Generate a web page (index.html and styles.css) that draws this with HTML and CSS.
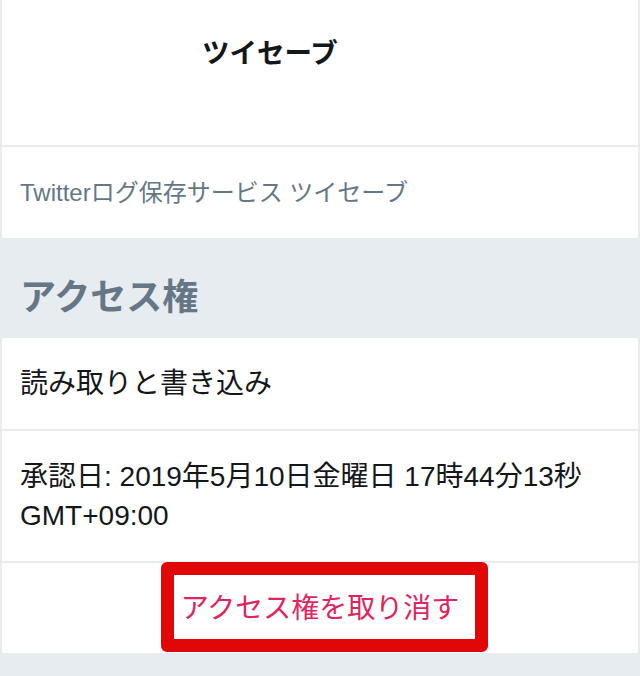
FILE: index.html
```html
<!DOCTYPE html>
<html lang="ja">
<head>
    <meta charset="UTF-8">
    <meta name="viewport" content="width=device-width, initial-scale=1.0">
    <title>ツイセーブ</title>
    <link rel="stylesheet" href="styles.css">
</head>
<body>
    <div class="page">
        <div class="header">
            <h1 class="app-title">ツイセーブ</h1>
        </div>
        <div class="row row-muted">Twitterログ保存サービス ツイセーブ</div>
        <h2 class="section-title">アクセス権</h2>
        <div class="row">読み取りと書き込み</div>
        <div class="row">承認日: 2019年5月10日金曜日 17時44分13秒<br>GMT+09:00</div>
        <div class="row row-action">
            <button class="revoke-button">アクセス権を取り消す</button>
        </div>
    </div>
</body>
</html>
```

FILE: styles.css
```css
body {
    margin: 0;
    padding: 0;
    background: #e6ecf0;
    font-family: 'Liberation Sans', 'Noto Sans CJK JP', sans-serif;
    color: #14171a;
    overflow: hidden;
}

.page {
    display: flex;
    flex-direction: column;
    gap: 2px;
    padding: 0 2px;
}

.header {
    background: #fff;
    height: 145px;
    padding-left: 200px;
    box-sizing: border-box;
}

.app-title {
    margin: 0;
    padding-top: 34px;
    font-size: 27.5px;
    line-height: 40px;
    font-weight: 700;
}

.row {
    background: #fff;
    padding: 26px 20px 26px 18px;
    font-size: 28px;
    line-height: 39px;
}

.row-muted {
    font-size: 24px;
    color: #657786;
}

.section-title {
    margin: -2px -2px;
    padding: 38px 20px 18px 20px;
    font-size: 36px;
    line-height: 44px;
    font-weight: 700;
    color: #657786;
}

.row-action {
    display: flex;
    justify-content: center;
    padding: 0 0 1px 0;
}

.revoke-button {
    border: 13px solid #e10707;
    border-radius: 6px;
    background: #fff;
    padding: 14px 16px 11px 7px;
    margin-left: 9px;
    margin-top: -1px;
    font-family: inherit;
    font-size: 28px;
    line-height: 39px;
    color: #e0245e;
    cursor: pointer;
}
```
